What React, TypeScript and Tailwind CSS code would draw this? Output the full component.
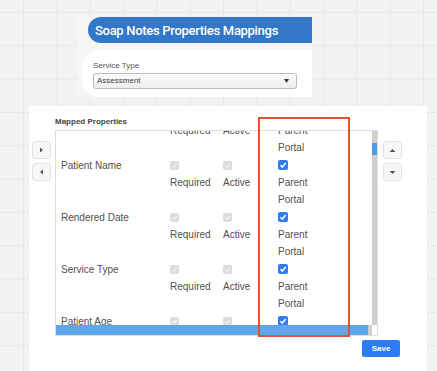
import React from 'react';

// rows of the mapped-properties table; the first one is scrolled mostly out of view
const ROWS = ['Patient ID', 'Patient Name', 'Rendered Date', 'Service Type', 'Patient Age'];

function GrayCheck() {
  return (
    <span className="flex h-[9px] w-[9px] items-center justify-center rounded-[2px] bg-[#dddddd]">
      <svg width="7" height="7" viewBox="0 0 10 10">
        <path d="M2 5.2 L4.2 7.4 L8.2 2.6" fill="none" stroke="#f4f4f4" strokeWidth="1.6" />
      </svg>
    </span>
  );
}

function BlueCheck() {
  return (
    <span className="flex h-[10px] w-[10px] items-center justify-center rounded-[2px] bg-[#2f7cf3]">
      <svg width="8" height="8" viewBox="0 0 10 10">
        <path d="M1.8 5.2 L4.1 7.6 L8.4 2.4" fill="none" stroke="#ffffff" strokeWidth="1.8" />
      </svg>
    </span>
  );
}

function NavButton({ dir }: { dir: 'left' | 'right' | 'up' | 'down' }) {
  const pts = {
    right: '3,1.5 6,4 3,6.5',
    left: '6,1.5 3,4 6,6.5',
    up: '1.5,6 4.5,3 7.5,6',
    down: '1.5,3 4.5,6 7.5,3',
  }[dir];
  return (
    <div className="flex h-[18px] w-[19px] items-center justify-center rounded-[3px] border border-[#e2e2e2] bg-[#f7f7f7]">
      <svg width="9" height="8" viewBox="0 0 9 8">
        <polygon points={pts} fill="#555" />
      </svg>
    </div>
  );
}

export default function App() {
  return (
    <div
      className="relative flex h-[371px] w-[437px] flex-col overflow-hidden bg-[#f2f2f2] bg-[linear-gradient(to_right,#e7e7e7_1px,transparent_1px),linear-gradient(to_bottom,#e7e7e7_1px,transparent_1px)] [background-size:33.33px_33.33px] [background-position:23px_12px] font-['Liberation_Sans',Arial,sans-serif] text-[#505050]"
    >
      {/* header block */}
      <div className="ml-[77px] mt-[17px] w-[235px] bg-[#f6f6f6]">
        <div className="ml-[11px] flex h-[26px] items-center rounded-l-[13px] bg-[#3277c8] pl-[7px] pt-[1px] font-['Roboto',sans-serif] text-[13px] font-medium tracking-[-0.3px] text-white">
          Soap Notes Properties Mappings
        </div>
        <div className="ml-[5px] mt-[7px] h-[47px] rounded-l-[18px] bg-white pl-[11px] pt-[11px]">
          <div className="text-[8px] leading-[10px] text-[#555]">Service Type</div>
          <div className="mt-[2px] flex h-[16px] w-[204px] items-center justify-between rounded-[3px] border border-[#bdbdbd] bg-[linear-gradient(#fafafa,#ededed)] pl-[3px] pr-[7px] text-[8px] text-[#444]">
            <span>Assessment</span>
            <svg width="5" height="4" viewBox="0 0 5 4">
              <polygon points="0,0 5,0 2.5,4" fill="#333" />
            </svg>
          </div>
        </div>
      </div>

      {/* mapped properties panel */}
      <div className="ml-[29px] mt-[9px] flex w-[398px] flex-1 flex-col bg-white">
        <div className="flex">
          <div className="flex w-[26px] flex-col gap-[4px] pl-[3px] pt-[35px]">
            <NavButton dir="right" />
            <NavButton dir="left" />
          </div>

          <div className="flex w-[323px] flex-col">
            <div className="pt-[11px] text-[8px] font-bold leading-[10px] text-[#444]">Mapped Properties</div>
            <div className="mt-[3px] border border-[#dddddd]">
              <div className="flex">
                <div className="h-[194px] flex-1 overflow-hidden text-[10px]">
                  <div className="-mt-[27px]">
                    {ROWS.map((name) => (
                      <div key={name} className="flex h-[52px]">
                        <div className="flex h-[18px] w-[109px] items-center pl-[5px]">{name}</div>
                        <div className="w-[53px] pl-[5px]">
                          <div className="flex h-[18px] items-center"><GrayCheck /></div>
                          <div className="leading-[17px]">Required</div>
                        </div>
                        <div className="w-[55px] pl-[5px]">
                          <div className="flex h-[18px] items-center"><GrayCheck /></div>
                          <div className="leading-[17px]">Active</div>
                        </div>
                        <div className="w-[60px] pl-[5px]">
                          <div className="flex h-[18px] items-center"><BlueCheck /></div>
                          <div className="w-[40px] leading-[17px]">Parent Portal</div>
                        </div>
                      </div>
                    ))}
                  </div>
                </div>
                <div className="w-[5px] bg-[#cfcfcf] pt-[12px]">
                  <div className="h-[12px] bg-[#4e9be6]" />
                </div>
              </div>
              <div className="flex h-[10px]">
                <div className="flex-1 bg-[#5ca7ec]" />
                <div className="w-[4px] bg-[#cfcfcf]" />
                <div className="w-[5px] bg-white" />
              </div>
            </div>
          </div>

          <div className="flex flex-col gap-[4px] pl-[5px] pt-[35px]">
            <NavButton dir="up" />
            <NavButton dir="down" />
          </div>
        </div>

        <div className="flex justify-end pr-[27px] pt-[4px]">
          <button className="h-[17px] w-[38px] rounded-[2px] bg-[#2d7cf5] text-[8px] font-bold text-white">
            Save
          </button>
        </div>
      </div>

      {/* annotation box */}
      <div className="absolute left-[258px] top-[117px] h-[220px] w-[92px] border-2 border-[#e8502f]" />
    </div>
  );
}
